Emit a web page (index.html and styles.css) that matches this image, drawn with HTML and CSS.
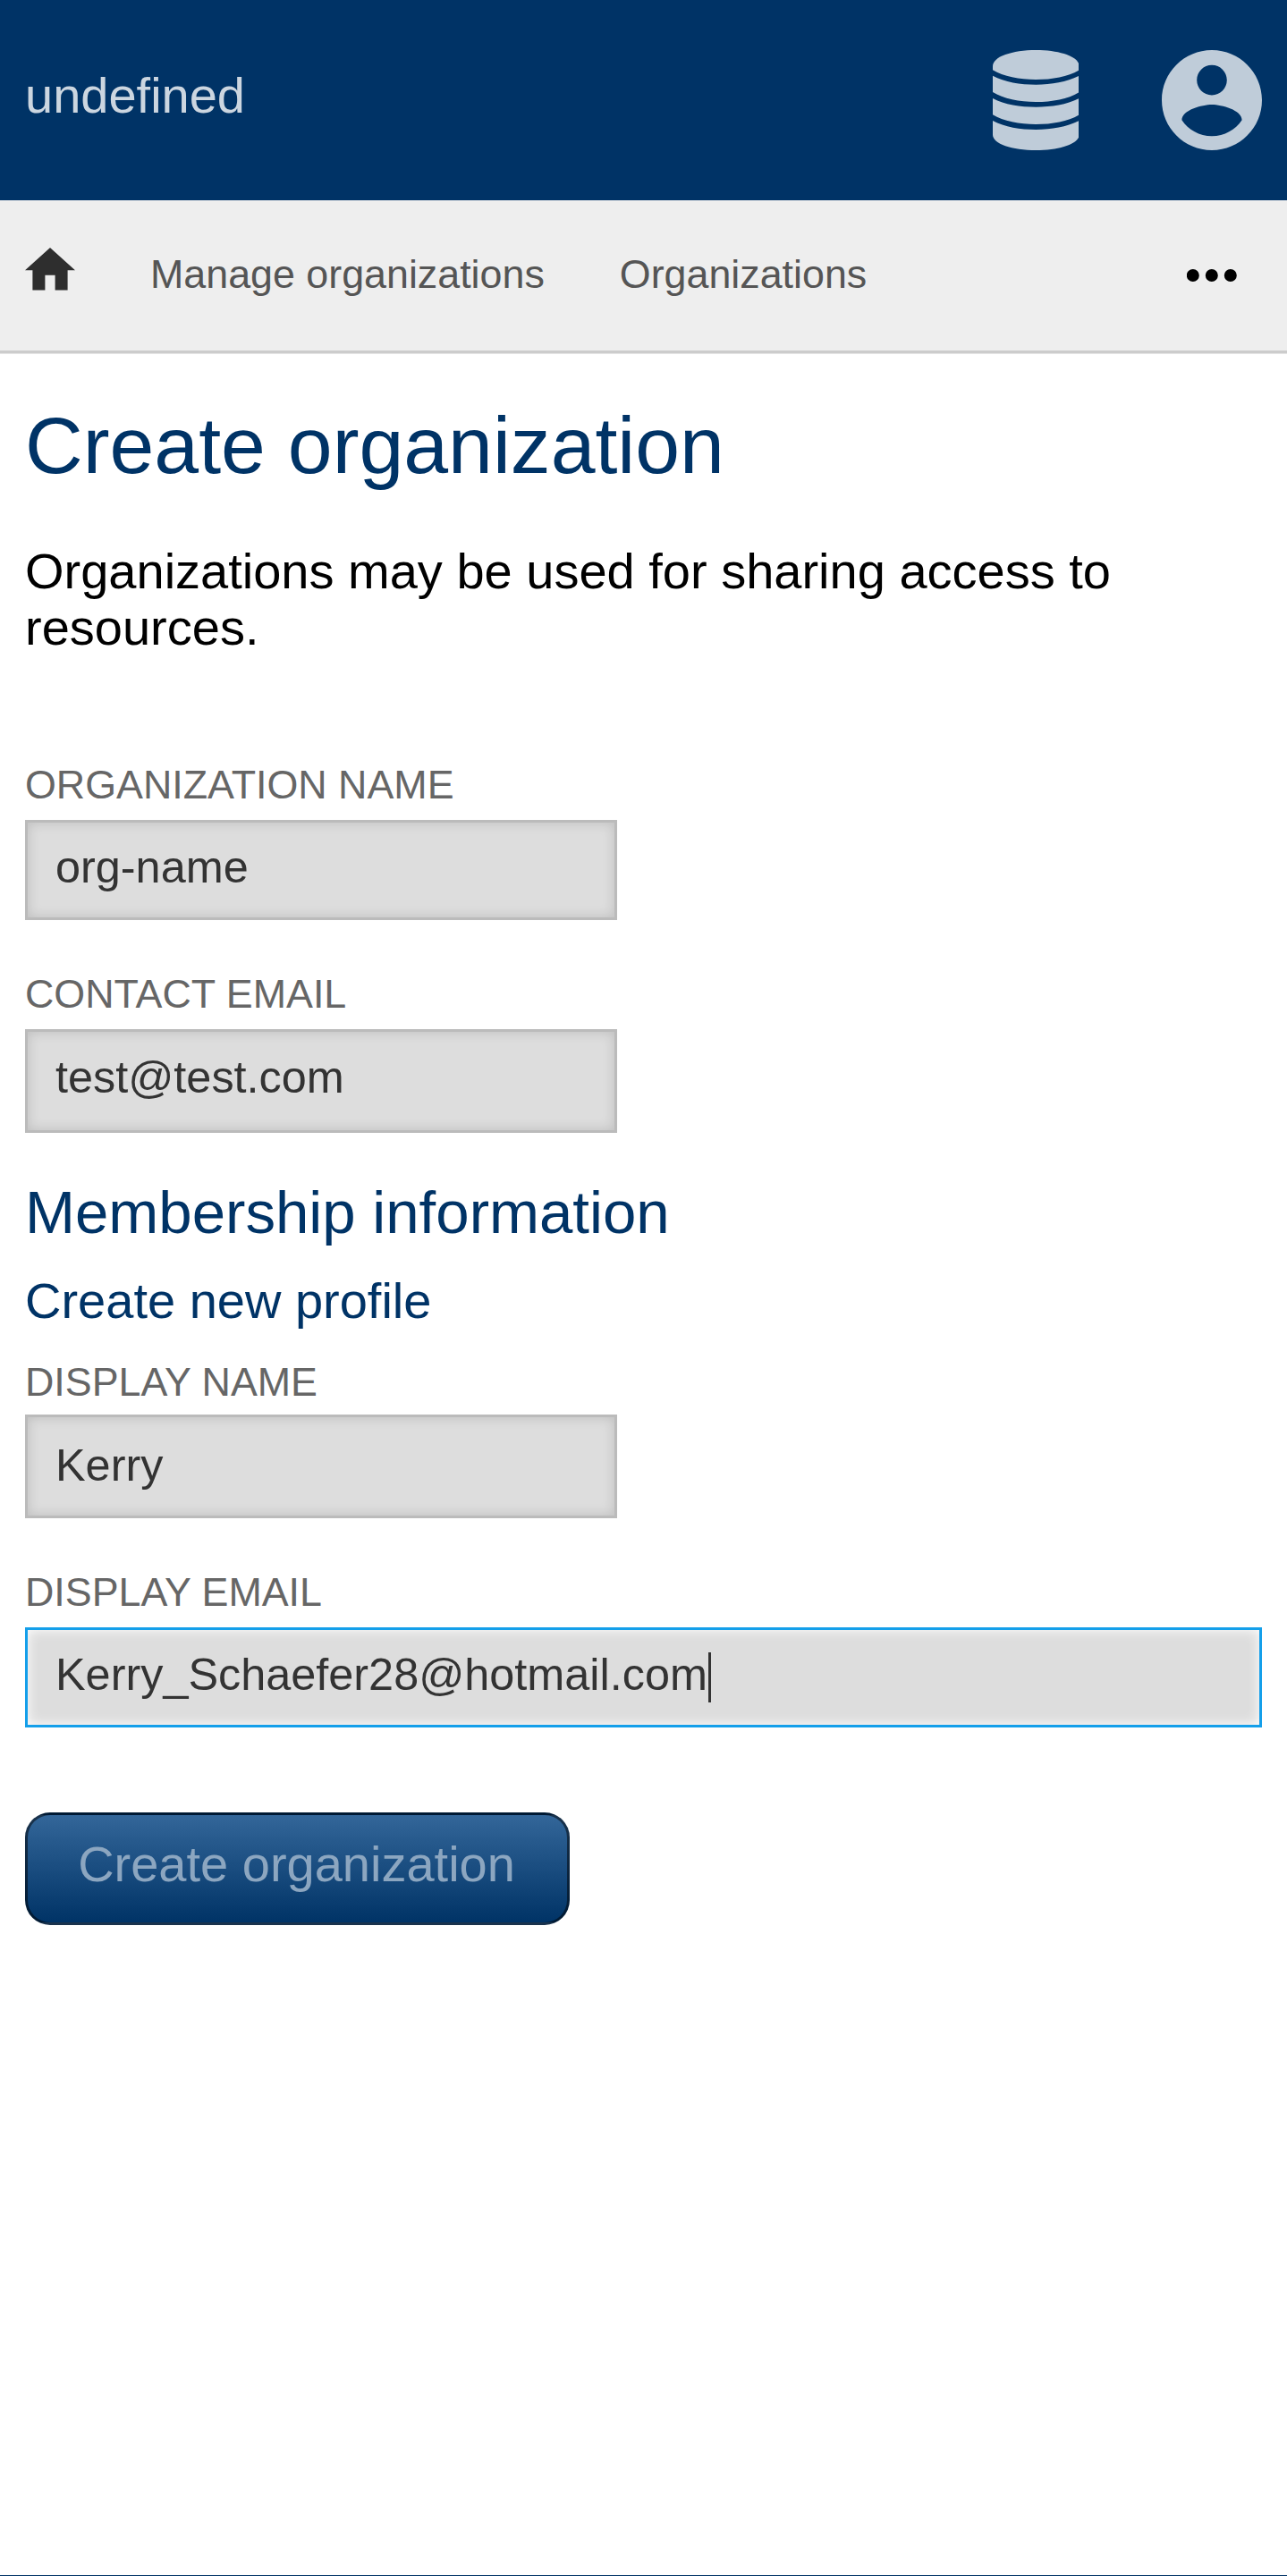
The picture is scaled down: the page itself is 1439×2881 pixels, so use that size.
FILE: index.html
```html
<!DOCTYPE html>
<html lang="en">
<head>
<meta charset="utf-8">
<title>Create organization</title>
<link rel="stylesheet" href="styles.css">
</head>
<body>
<header class="header">
  <a class="brand">undefined</a>
  <div class="header-actions">
    <svg class="icon-database" viewBox="0 0 290 336" preserveAspectRatio="none" aria-label="Data">
      <path d="M0 54C0 22 65 0 145 0S290 22 290 54V67C255 89 200 99 145 99S35 89 0 67Z"/>
      <path d="M0 86C40 107 92 116 145 116S250 107 290 86V141C255 163 200 174 145 174S35 163 0 141Z"/>
      <path d="M0 162C40 183 92 191 145 191S250 183 290 162V217C255 239 200 249 145 249S35 239 0 217Z"/>
      <path d="M0 237C40 258 92 267 145 267S250 258 290 237V284C290 314 225 336 145 336S0 314 0 284Z"/>
    </svg>
    <svg class="icon-account" viewBox="2 2 20 20" aria-label="Account">
      <path d="M12 2C6.48 2 2 6.48 2 12s4.48 10 10 10 10-4.48 10-10S17.52 2 12 2zm0 3c1.66 0 3 1.34 3 3s-1.34 3-3 3-3-1.34-3-3 1.34-3 3-3zm0 14.2c-2.5 0-4.71-1.28-6-3.22.03-1.99 4-3.08 6-3.08 1.99 0 5.97 1.09 6 3.08-1.29 1.94-3.5 3.22-6 3.22z"/>
    </svg>
  </div>
</header>
<nav class="nav">
  <svg class="icon-home" viewBox="2 3 20 17" aria-label="Home"><path d="M10 20v-6h4v6h5v-8h3L12 3 2 12h3v8z"/></svg>
  <a class="nav-link">Manage organizations</a>
  <a class="nav-link">Organizations</a>
  <svg class="icon-more" viewBox="0 0 56 14" aria-label="More"><circle cx="6.8" cy="7" r="7"/><circle cx="27.8" cy="7" r="7"/><circle cx="48.8" cy="7" r="7"/></svg>
</nav>
<main class="main">
  <h1 class="title">Create organization</h1>
  <p class="intro">Organizations may be used for sharing access to resources.</p>
  <form class="form">
    <label class="label">Organization name</label>
    <div class="field"><span>org-name</span></div>
    <label class="label label-next">Contact email</label>
    <div class="field field-tall"><span>test@test.com</span></div>
    <h2 class="section">Membership information</h2>
    <h3 class="subsection">Create new profile</h3>
    <label class="label label-profile">Display name</label>
    <div class="field field-profile"><span>Kerry</span></div>
    <label class="label label-next">Display email</label>
    <div class="field field-focus"><span>Kerry_Schaefer28@hotmail.com</span><i class="caret"></i></div>
    <button class="submit" type="button">Create organization</button>
  </form>
</main>
<footer class="footer"></footer>
</body>
</html>
```
FILE: styles.css
```css
* { box-sizing: border-box; }
body {
  margin: 0;
  height: 2881px;
  display: flex;
  flex-direction: column;
  overflow: hidden;
  background: #fff;
  color: #000;
  font: 56px/63px "Liberation Sans", Arial, sans-serif;
}
.header {
  height: 224px;
  padding: 0 28.5px 0 28px;
  display: flex;
  justify-content: space-between;
  background: #003366;
}
.brand { padding-top: 75px; color: #ccd6e0; }
.header-actions { display: flex; gap: 92.3px; padding-top: 56px; fill: #bfccd9; }
.icon-database { width: 96.7px; height: 112px; }
.icon-account { width: 112px; height: 112px; }
.nav {
  height: 171px;
  padding: 0 56px 0 28px;
  display: flex;
  align-items: flex-start;
  background: #eee;
  border-bottom: 3px solid #ccc;
  box-shadow: 0 1px 0 #e5e5e5;
}
.icon-home { width: 56px; height: 47.6px; margin-top: 53.4px; fill: #2e2e2e; }
.nav-link {
  margin: 57px 0 0 84px;
  font-size: 44.8px;
  line-height: 50px;
  color: #555;
}
.icon-more { width: 56px; height: 14px; margin: 77px 0 0 auto; }
.main { flex: 1; padding: 53px 28px 0; }
.title, .section, .subsection { margin: 0; font-weight: 400; color: #003366; }
.title { font-size: 89.6px; line-height: 100px; }
.intro { margin: 59px 0 119px; }
.form { display: flex; flex-direction: column; align-items: flex-start; }
.label {
  margin-bottom: 15px;
  font-size: 44.8px;
  line-height: 50px;
  color: #666;
  text-transform: uppercase;
}
.label-next { margin-top: 57px; }
.field {
  width: 662px;
  height: 112px;
  padding: 21px 31px 0;
  display: flex;
  align-items: flex-start;
  border: 3px solid #bbb;
  background: #ddd;
  box-shadow: inset 0 0 14px rgba(0, 0, 0, .15);
  color: #333;
  font-size: 50.4px;
  line-height: 57px;
}
.field-tall { height: 116px; padding-top: 22px; }
.section { margin-top: 51px; font-size: 67.2px; line-height: 75px; }
.subsection { margin-top: 30px; font-size: 56px; }
.label-profile { margin: 34px 0 12px; }
.field-profile { height: 116px; padding-top: 25px; }
.field-focus {
  width: 1383px;
  border-color: #149fea;
  box-shadow: inset 0 0 14px #fff;
}
.caret { width: 3px; height: 56px; margin: 4px 0 0 1px; background: #333; }
.submit {
  width: 609px;
  height: 126px;
  margin: 94.5px 0 0;
  padding: 0 2px 10px 0;
  border: 3px solid rgba(0, 0, 0, .5);
  border-radius: 28px;
  background: linear-gradient(#336699, #003366);
  color: #8ca6c0;
  font: inherit;
}
.footer { height: 1px; background: #003366; }
```
